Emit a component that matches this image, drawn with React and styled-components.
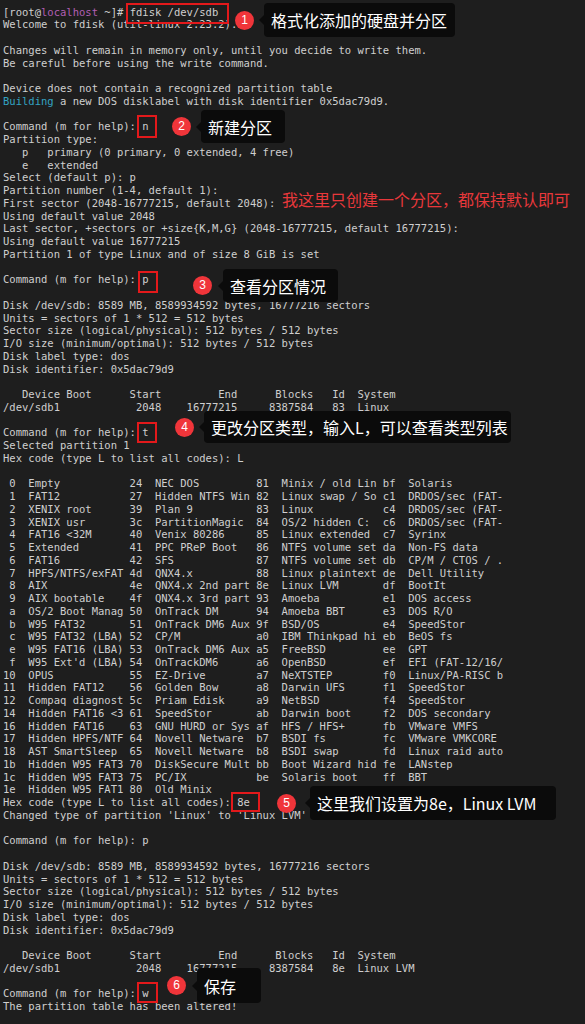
import React from 'react';
import styled, { createGlobalStyle } from 'styled-components';

const GlobalStyle = createGlobalStyle`
    html, body {
        margin: 0;
        padding: 0;
        background: #1e1e1e;
    }
`;

const Screen = styled.div`
    position: relative;
    width: 585px;
    height: 1024px;
    box-sizing: border-box;
    padding: 5.6px 0 0 3px;
    background: #1e1e1e;
    overflow: hidden;
`;

const Output = styled.div`
    font-family: "DejaVu Sans Mono", monospace;
    font-size: 10.53px;
    color: #cfcfcf;
`;

const Line = styled.div`
    height: 12.76px;
    line-height: 12.76px;
    white-space: pre;
`;

const Host = styled.span`
    color: #b25fb4;
`;

const Info = styled.span`
    color: #33a3c2;
`;

// red frame drawn over the typed command
const Mark = styled.div`
    position: absolute;
    left: ${({ $x }) => $x}px;
    top: ${({ $y }) => $y}px;
    width: ${({ $w }) => $w}px;
    height: ${({ $h }) => $h}px;
    box-sizing: border-box;
    border: 2px solid #e3191b;
`;

// numbered badge + dark bubble, floating over the terminal
const Callout = styled.div`
    position: absolute;
    left: ${({ $x }) => $x}px;
    top: ${({ $y }) => $y}px;
    display: flex;
    align-items: center;
    gap: ${({ $gap }) => $gap}px;
`;

const Badge = styled.div`
    flex: none;
    width: 19px;
    height: 19px;
    border-radius: 50%;
    background: #f0353a;
    color: #fff;
    font-family: "Liberation Sans", Arial, sans-serif;
    font-size: 12px;
    line-height: 19px;
    text-align: center;
`;

const Tip = styled.div`
    position: relative;
    width: ${({ $w }) => $w}px;
    height: ${({ $h }) => $h}px;
    box-sizing: border-box;
    padding-left: 7px;
    display: flex;
    align-items: center;
    background: #0b0b0b;
    border-radius: 4px;
    color: #fff;
    font-family: "Noto Sans CJK SC", "Noto Sans", sans-serif;
    font-size: 16px;
    white-space: nowrap;

    &::before {
        content: '';
        position: absolute;
        left: -5px;
        top: 50%;
        margin-top: -5px;
        border-style: solid;
        border-width: 5px 5px 5px 0;
        border-color: transparent #0b0b0b transparent transparent;
    }
`;

const Note = styled.div`
    position: absolute;
    left: 282px;
    top: 189px;
    line-height: 20px;
    color: #e8383b;
    font-family: "Noto Sans CJK SC", "Noto Sans", sans-serif;
    font-size: 16px;
    white-space: nowrap;
`;

const types = [
    ['0', 'Empty'], ['24', 'NEC DOS'], ['81', 'Minix / old Lin'], ['bf', 'Solaris'],
    ['1', 'FAT12'], ['27', 'Hidden NTFS Win'], ['82', 'Linux swap / So'], ['c1', 'DRDOS/sec (FAT-'],
    ['2', 'XENIX root'], ['39', 'Plan 9'], ['83', 'Linux'], ['c4', 'DRDOS/sec (FAT-'],
    ['3', 'XENIX usr'], ['3c', 'PartitionMagic'], ['84', 'OS/2 hidden C:'], ['c6', 'DRDOS/sec (FAT-'],
    ['4', 'FAT16 <32M'], ['40', 'Venix 80286'], ['85', 'Linux extended'], ['c7', 'Syrinx'],
    ['5', 'Extended'], ['41', 'PPC PReP Boot'], ['86', 'NTFS volume set'], ['da', 'Non-FS data'],
    ['6', 'FAT16'], ['42', 'SFS'], ['87', 'NTFS volume set'], ['db', 'CP/M / CTOS / .'],
    ['7', 'HPFS/NTFS/exFAT'], ['4d', 'QNX4.x'], ['88', 'Linux plaintext'], ['de', 'Dell Utility'],
    ['8', 'AIX'], ['4e', 'QNX4.x 2nd part'], ['8e', 'Linux LVM'], ['df', 'BootIt'],
    ['9', 'AIX bootable'], ['4f', 'QNX4.x 3rd part'], ['93', 'Amoeba'], ['e1', 'DOS access'],
    ['a', 'OS/2 Boot Manag'], ['50', 'OnTrack DM'], ['94', 'Amoeba BBT'], ['e3', 'DOS R/O'],
    ['b', 'W95 FAT32'], ['51', 'OnTrack DM6 Aux'], ['9f', 'BSD/OS'], ['e4', 'SpeedStor'],
    ['c', 'W95 FAT32 (LBA)'], ['52', 'CP/M'], ['a0', 'IBM Thinkpad hi'], ['eb', 'BeOS fs'],
    ['e', 'W95 FAT16 (LBA)'], ['53', 'OnTrack DM6 Aux'], ['a5', 'FreeBSD'], ['ee', 'GPT'],
    ['f', "W95 Ext'd (LBA)"], ['54', 'OnTrackDM6'], ['a6', 'OpenBSD'], ['ef', 'EFI (FAT-12/16/'],
    ['10', 'OPUS'], ['55', 'EZ-Drive'], ['a7', 'NeXTSTEP'], ['f0', 'Linux/PA-RISC b'],
    ['11', 'Hidden FAT12'], ['56', 'Golden Bow'], ['a8', 'Darwin UFS'], ['f1', 'SpeedStor'],
    ['12', 'Compaq diagnost'], ['5c', 'Priam Edisk'], ['a9', 'NetBSD'], ['f4', 'SpeedStor'],
    ['14', 'Hidden FAT16 <3'], ['61', 'SpeedStor'], ['ab', 'Darwin boot'], ['f2', 'DOS secondary'],
    ['16', 'Hidden FAT16'], ['63', 'GNU HURD or Sys'], ['af', 'HFS / HFS+'], ['fb', 'VMware VMFS'],
    ['17', 'Hidden HPFS/NTF'], ['64', 'Novell Netware'], ['b7', 'BSDI fs'], ['fc', 'VMware VMKCORE'],
    ['18', 'AST SmartSleep'], ['65', 'Novell Netware'], ['b8', 'BSDI swap'], ['fd', 'Linux raid auto'],
    ['1b', 'Hidden W95 FAT3'], ['70', 'DiskSecure Mult'], ['bb', 'Boot Wizard hid'], ['fe', 'LANstep'],
    ['1c', 'Hidden W95 FAT3'], ['75', 'PC/IX'], ['be', 'Solaris boot'], ['ff', 'BBT'],
    ['1e', 'Hidden W95 FAT1'], ['80', 'Old Minix'],
];

const typeRows = [];
for (let i = 0; i < types.length; i += 4) {
    typeRows.push(
        types.slice(i, i + 4)
            .map(([hex, name]) => hex.padStart(2) + '  ' + name.padEnd(15))
            .join(' ')
            .trimEnd()
    );
}

const diskInfo = [
    'Disk /dev/sdb: 8589 MB, 8589934592 bytes, 16777216 sectors',
    'Units = sectors of 1 * 512 = 512 bytes',
    'Sector size (logical/physical): 512 bytes / 512 bytes',
    'I/O size (minimum/optimal): 512 bytes / 512 bytes',
    'Disk label type: dos',
    'Disk identifier: 0x5dac79d9',
    '',
    '   Device Boot      Start         End      Blocks   Id  System',
];

const lines = [
    <>[root@<Host>localhost</Host> ~]# fdisk /dev/sdb</>,
    'Welcome to fdisk (util-linux 2.23.2).',
    '',
    'Changes will remain in memory only, until you decide to write them.',
    'Be careful before using the write command.',
    '',
    'Device does not contain a recognized partition table',
    <><Info>Building</Info> a new DOS disklabel with disk identifier 0x5dac79d9.</>,
    '',
    'Command (m for help): n',
    'Partition type:',
    '   p   primary (0 primary, 0 extended, 4 free)',
    '   e   extended',
    'Select (default p): p',
    'Partition number (1-4, default 1):',
    'First sector (2048-16777215, default 2048):',
    'Using default value 2048',
    'Last sector, +sectors or +size{K,M,G} (2048-16777215, default 16777215):',
    'Using default value 16777215',
    'Partition 1 of type Linux and of size 8 GiB is set',
    '',
    'Command (m for help): p',
    '',
    ...diskInfo,
    '/dev/sdb1            2048    16777215     8387584   83  Linux',
    '',
    'Command (m for help): t',
    'Selected partition 1',
    'Hex code (type L to list all codes): L',
    '',
    ...typeRows,
    'Hex code (type L to list all codes): 8e',
    "Changed type of partition 'Linux' to 'Linux LVM'",
    '',
    'Command (m for help): p',
    '',
    ...diskInfo,
    '/dev/sdb1            2048    16777215     8387584   8e  Linux LVM',
    '',
    'Command (m for help): w',
    'The partition table has been altered!',
];

const steps = [
    { n: 1, box: [126, 3, 103, 21], at: [235, 3], gap: 10, tip: [191, 34], text: '格式化添加的硬盘并分区' },
    { n: 2, box: [137, 115, 20, 23], at: [172, 110], gap: 10, tip: [84, 33], text: '新建分区' },
    { n: 3, box: [138, 271, 20, 22], at: [193, 269], gap: 11, tip: [115, 33], text: '查看分区情况' },
    { n: 4, box: [137, 422, 20, 21], at: [175, 411], gap: 10, tip: [307, 32], text: '更改分区类型，输入L，可以查看类型列表' },
    { n: 5, box: [231, 792, 29, 20], at: [277, 786], gap: 14, tip: [246, 34], text: '这里我们设置为8e，Linux LVM' },
    { n: 6, box: [137, 982, 21, 21], at: [167, 968], gap: 11, tip: [64, 35], text: '保存' },
];

const Step = ({ n, box, at, gap, tip, text }) => (
    <>
        <Mark $x={box[0]} $y={box[1]} $w={box[2]} $h={box[3]} />
        <Callout $x={at[0]} $y={at[1]} $gap={gap}>
            <Badge>{n}</Badge>
            <Tip $w={tip[0]} $h={tip[1]}>{text}</Tip>
        </Callout>
    </>
);

export default function App() {
    return (
        <>
            <GlobalStyle />
            <Screen>
                <Output>
                    {lines.map((line, i) => <Line key={i}>{line}</Line>)}
                </Output>
                {steps.map(step => <Step key={step.n} {...step} />)}
                <Note>我这里只创建一个分区，都保持默认即可</Note>
            </Screen>
        </>
    );
}
